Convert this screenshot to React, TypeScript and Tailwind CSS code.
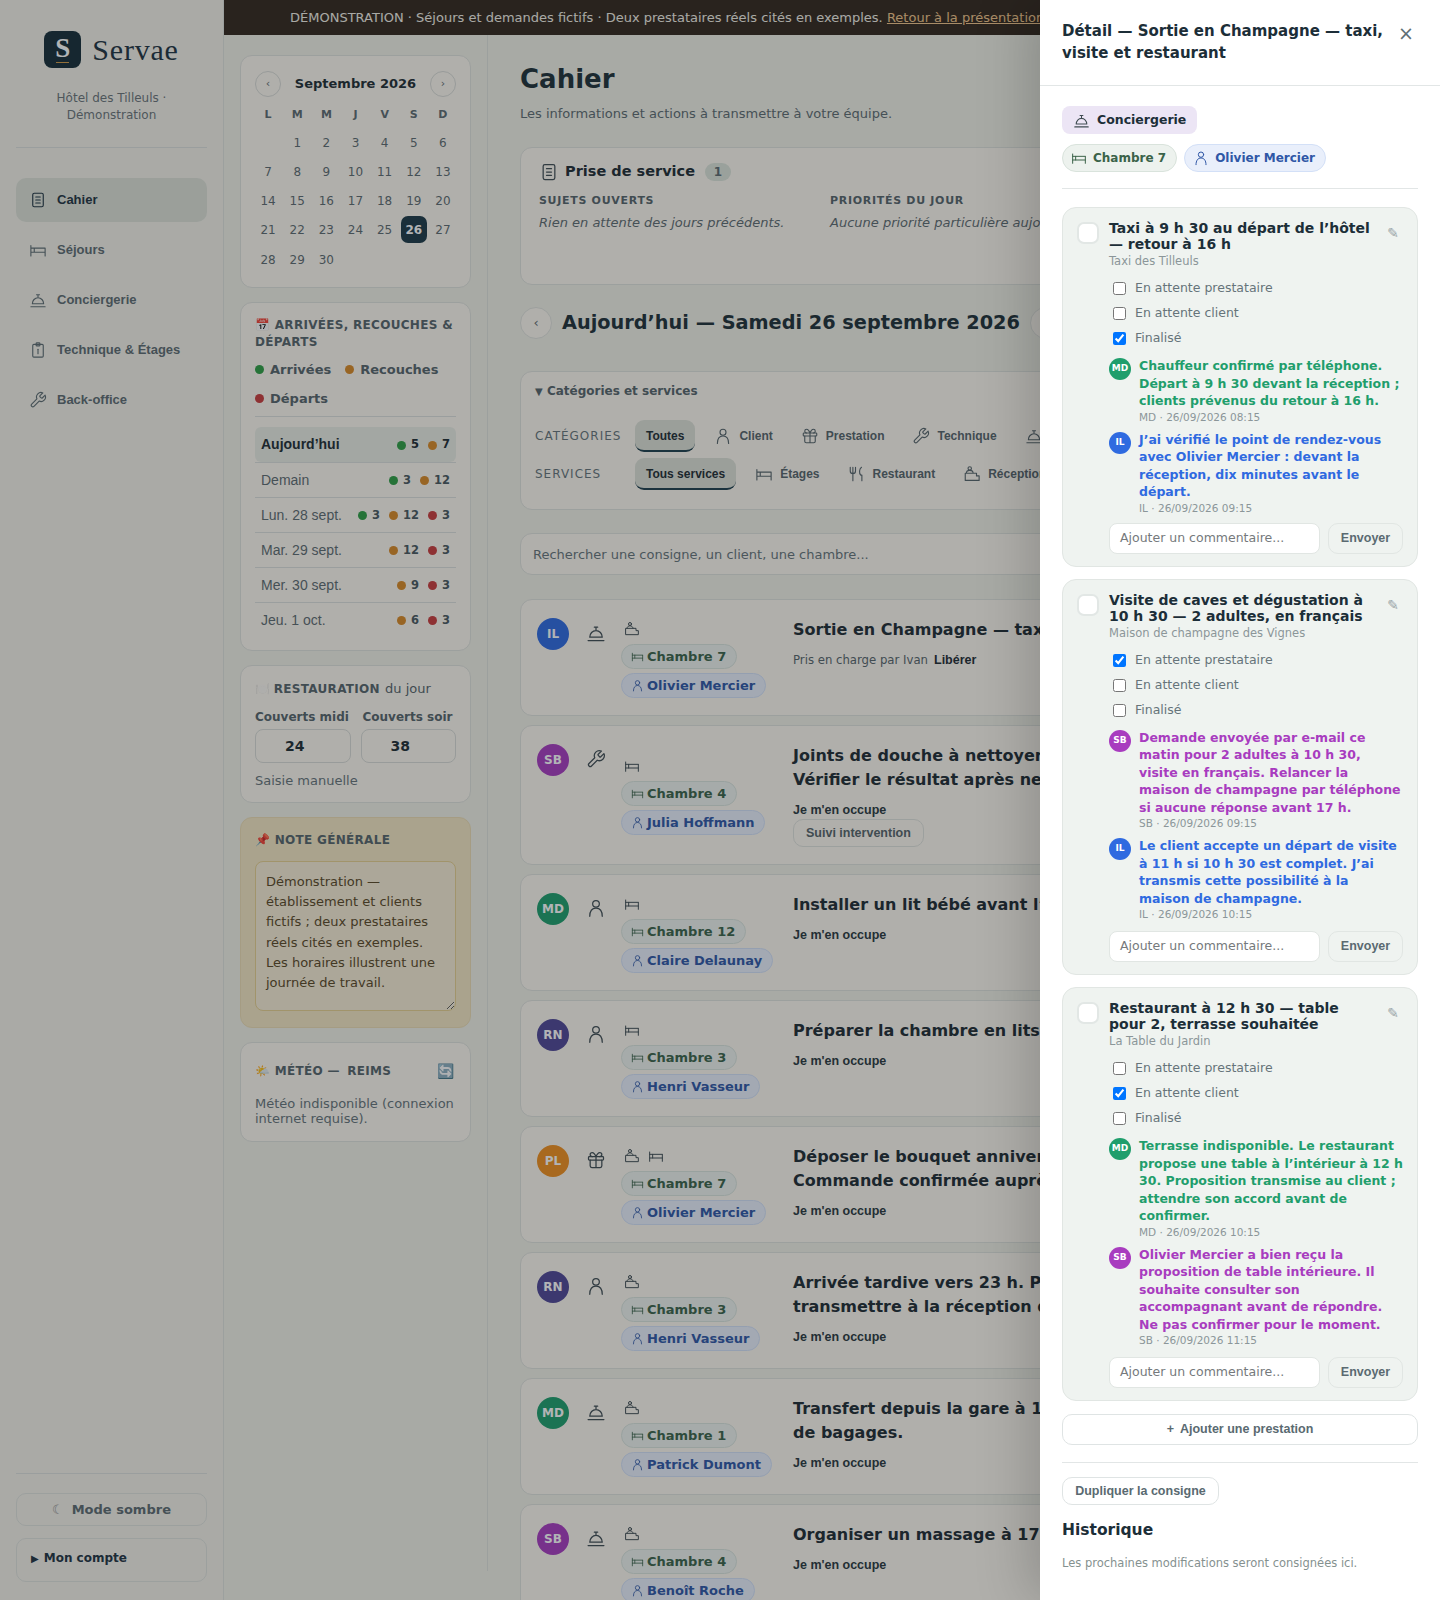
import React from "react";

type IP = { className?: string };
const S = ({ className, children }: IP & { children: React.ReactNode }) => (
  <svg viewBox="0 0 24 24" fill="none" stroke="currentColor" strokeWidth={1.5} strokeLinecap="round" strokeLinejoin="round" className={className}>
    {children}
  </svg>
);
const Doc = (p: IP) => <S {...p}><rect x="5" y="3" width="14" height="18" rx="2" /><path d="M9 8h6M9 12h6M9 16h6" /></S>;
const Bed = (p: IP) => <S {...p}><path d="M2.500 6v14M21.500 10v10M2.500 9.500h19M2.500 15h19M7 9.500v5.500" /></S>;
const Bell = (p: IP) => <S {...p}><path d="M10 5h4M12 5v3M4.500 17a7.500 8 0 0 1 15 0zM2.500 21h19" /></S>;
const Clip = (p: IP) => <S {...p}><rect x="5" y="4.500" width="14" height="17" rx="1.500" /><rect x="9.500" y="2.500" width="5" height="4" rx="1" /><path d="M12 11v6" /></S>;
const Wrench = (p: IP) => <S {...p}><path d="M14.700 6.300a1 1 0 0 0 0 1.400l1.600 1.600a1 1 0 0 0 1.400 0l3.770-3.770a6 6 0 0 1-7.940 7.940l-6.910 6.910a2.120 2.120 0 0 1-3-3l6.910-6.910a6 6 0 0 1 7.940-7.940l-3.760 3.760z" /></S>;
const Person = (p: IP) => <S {...p}><circle cx="12" cy="7" r="4" /><path d="M4.500 22c0-6.500 3-10 7.500-10s7.500 3.500 7.500 10" /></S>;
const Gift = (p: IP) => <S {...p}><rect x="3" y="8" width="18" height="4" rx="1" /><path d="M12 8v13M19 12v7a2 2 0 0 1-2 2H7a2 2 0 0 1-2-2v-7M7.500 8a2.500 2.500 0 0 1 0-5C10 3 12 8 12 8s2-5 4.500-5a2.500 2.500 0 0 1 0 5" /></S>;
const Fork = (p: IP) => <S {...p}><path d="M3 3v5a3.500 3.500 0 0 0 7 0V3M6.500 3v18M18 3c-3 2-3.500 8-1 10.500h1.500V21" /></S>;
const Desk = (p: IP) => <S {...p}><circle cx="9" cy="4.500" r="2.250" /><path d="M4.500 11c0-2.200 2-3.800 4.500-3.800s4.500 1.600 4.500 3.800M3 11h15v3.500h3.500v6H3z" /></S>;

const LIB = "font-['Liberation_Sans',Arial,sans-serif]";
const CARD = "rounded-[12px] border border-[#dfe1db] bg-[#fdf8ef]";
const SIDE = "rounded-[12px] border border-[#dfe1db] bg-[#fdf8ef] px-[14px]";

const week = ["L", "M", "M", "J", "V", "S", "D"];
const days: (number | null)[] = [null, ...Array.from({ length: 30 }, (_, i) => i + 1)];

const rows = [
  { d: "Aujourd’hui", a: 5, r: 7, x: 0, on: true },
  { d: "Demain", a: 3, r: 12, x: 0 },
  { d: "Lun. 28 sept.", a: 3, r: 12, x: 3 },
  { d: "Mar. 29 sept.", a: 0, r: 12, x: 3 },
  { d: "Mer. 30 sept.", a: 0, r: 9, x: 3 },
  { d: "Jeu. 1 oct.", a: 0, r: 6, x: 3 },
];

const Count = ({ c, n, dark }: { c: string; n: number; dark?: boolean }) => (
  <span className={`flex items-center gap-[5px] text-[11.5px] font-bold ${dark ? "text-[#1f2d33]" : "text-[#4a585e]"}`}>
    <span className={`h-[9px] w-[9px] rounded-full ${c}`} />
    {n}
  </span>
);

const cats = [
  { t: "Client", I: Person },
  { t: "Prestation", I: Gift },
  { t: "Technique", I: Wrench },
  { t: "Conciergerie", I: Bell },
];
const servs = [
  { t: "Étages", I: Bed },
  { t: "Restaurant", I: Fork },
  { t: "Réception", I: Desk },
];

const AV: Record<string, string> = {
  IL: "bg-[#2f6ae0]",
  SB: "bg-[#a83cbf]",
  MD: "bg-[#1f9e6c]",
  RN: "bg-[#4f4795]",
  PL: "bg-[#f08f1e]",
};

const tasks = [
  { a: "IL", c: Bell, s: [Desk], room: "Chambre 7", who: "Olivier Mercier", t: ["Sortie en Champagne — taxi, visite et restaurant"], own: true },
  { a: "SB", c: Wrench, s: [Bed], room: "Chambre 4", who: "Julia Hoffmann", t: ["Joints de douche à nettoyer et silicone à refaire.", "Vérifier le résultat après nettoyage."], follow: true, low: true },
  { a: "MD", c: Person, s: [Bed], room: "Chambre 12", who: "Claire Delaunay", t: ["Installer un lit bébé avant l’arrivée de la famille"] },
  { a: "RN", c: Person, s: [Bed], room: "Chambre 3", who: "Henri Vasseur", t: ["Préparer la chambre en lits séparés avant midi"] },
  { a: "PL", c: Gift, s: [Desk, Bed], room: "Chambre 7", who: "Olivier Mercier", t: ["Déposer le bouquet anniversaire en chambre avant 15 h.", "Commande confirmée auprès du fleuriste ce matin."] },
  { a: "RN", c: Person, s: [Desk], room: "Chambre 3", who: "Henri Vasseur", t: ["Arrivée tardive vers 23 h. Prévenir le veilleur et", "transmettre à la réception de nuit le code d’accès."] },
  { a: "MD", c: Bell, s: [Desk], room: "Chambre 1", who: "Patrick Dumont", t: ["Transfert depuis la gare à 14 h avec deux valises et sac", "de bagages."] },
  { a: "SB", c: Bell, s: [Desk], room: "Chambre 4", who: "Benoît Roche", t: ["Organiser un massage à 17 h au spa de l’hôtel"] },
];

const Chip = ({ I, t, blue, big }: { I: React.FC<IP>; t: string; blue?: boolean; big?: boolean }) => (
  <span
    className={`flex w-fit items-center rounded-full border font-bold whitespace-nowrap ${big ? "h-[28px] gap-[6px] pl-[8px] pr-[10px] text-[12px]" : "h-[25px] gap-[3px] pl-[9px] pr-[10px] text-[13px]"} ${
      blue ? "border-[#d3e0f7] bg-[#e9effb] text-[#2f57a6]" : "border-[#d9e3dc] bg-[#edf2ee] text-[#3b6349]"
    }`}
  >
    <I className={big ? "h-[16px] w-[16px]" : "h-[13px] w-[13px]"} />
    {t}
  </span>
);

const TaskCard = ({ task }: { task: (typeof tasks)[number] }) => (
  <div className={`${CARD} flex shrink-0 pb-[17px] pl-[16px] pr-[16px] pt-[18px]`}>
    <span className={`mr-[17px] flex h-[32px] w-[32px] shrink-0 items-center justify-center rounded-full text-[12px] font-bold text-white ${AV[task.a]}`}>{task.a}</span>
    <task.c className="mr-[15px] mt-[5px] h-[20px] w-[20px] shrink-0 text-[#3f4c52]" />
    <div className={`flex w-[172px] shrink-0 flex-col gap-[4px] ${task.low ? "mt-[11px]" : ""}`}>
      <div className="flex h-[22px] items-center gap-[8px] pl-[3px] text-[#3f4c52]">
        {task.s.map((I, i) => (
          <I key={i} className="h-[16px] w-[16px]" />
        ))}
      </div>
      <Chip I={Bed} t={task.room} />
      <Chip I={Person} t={task.who} blue />
    </div>
    <div className="min-w-0 flex-1">
      <div className="text-[16px] leading-[24px] font-bold whitespace-nowrap text-[#1e2c33]">
        {task.t.map((l, i) => (
          <div key={i}>{l}</div>
        ))}
      </div>
      <div className="mt-[10px] flex flex-col items-start">
        {task.own ? (
          <div className="flex items-center gap-[6px] text-[12.5px] leading-[16px]">
            <span className="font-['DejaVu_Sans_Condensed','DejaVu_Sans',sans-serif] text-[13px] text-[#56646a]">Pris en charge par Ivan</span>
            <span className={`${LIB} font-bold text-[#1e2c33]`}>Libérer</span>
          </div>
        ) : (
          <span className={`${LIB} text-[12.5px] leading-[16px] font-bold text-[#2a383e]`}>Je m'en occupe</span>
        )}
        {task.follow && (
          <span className={`${LIB} mt-[1px] flex h-[28px] items-center rounded-[10px] border border-[#dfe1db] px-[12px] text-[12.5px] font-bold text-[#566469]`}>Suivi intervention</span>
        )}
      </div>
    </div>
  </div>
);

const COLOR: Record<string, string> = {
  MD: "text-[#1f9e6c]",
  IL: "text-[#2f6ae0]",
  SB: "text-[#a83cbf]",
};

const items = [
  {
    t: "Taxi à 9 h 30 au départ de l’hôtel — retour à 16 h",
    sub: "Taxi des Tilleuls",
    st: [false, false, true],
    inp: "mt-[7px]",
    cm: [
      { a: "MD", t: "Chauffeur confirmé par téléphone. Départ à 9 h 30 devant la réception ; clients prévenus du retour à 16 h.", m: "MD · 26/09/2026 08:15" },
      { a: "IL", t: "J’ai vérifié le point de rendez-vous avec Olivier Mercier : devant la réception, dix minutes avant le départ.", m: "IL · 26/09/2026 09:15" },
    ],
  },
  {
    t: "Visite de caves et dégustation à 10 h 30 — 2 adultes, en français",
    sub: "Maison de champagne des Vignes",
    st: [true, false, false],
    inp: "mt-[9px]",
    cm: [
      { a: "SB", t: "Demande envoyée par e-mail ce matin pour 2 adultes à 10 h 30, visite en français. Relancer la maison de champagne par téléphone si aucune réponse avant 17 h.", m: "SB · 26/09/2026 09:15" },
      { a: "IL", t: "Le client accepte un départ de visite à 11 h si 10 h 30 est complet. J’ai transmis cette possibilité à la maison de champagne.", m: "IL · 26/09/2026 10:15" },
    ],
  },
  {
    t: "Restaurant à 12 h 30 — table pour 2, terrasse souhaitée",
    sub: "La Table du Jardin",
    st: [false, true, false],
    inp: "mt-[9px]",
    cm: [
      { a: "MD", t: "Terrasse indisponible. Le restaurant propose une table à l’intérieur à 12 h 30. Proposition transmise au client ; attendre son accord avant de confirmer.", m: "MD · 26/09/2026 10:15" },
      { a: "SB", t: "Olivier Mercier a bien reçu la proposition de table intérieure. Il souhaite consulter son accompagnant avant de répondre. Ne pas confirmer pour le moment.", m: "SB · 26/09/2026 11:15" },
    ],
  },
];
const labels = ["En attente prestataire", "En attente client", "Finalisé"];

const Item = ({ it }: { it: (typeof items)[number] }) => (
  <div className="rounded-[14px] border border-[#e1e6e3] bg-[#eff3f0] pb-[12px] pl-[14px] pr-[14px] pt-[12px]">
    <div className="flex">
      <span className="mt-[2px] mr-[10px] h-[22px] w-[22px] shrink-0 rounded-[7px] border-2 border-[#e2e7e5] bg-white" />
      <div className="min-w-0 flex-1">
        <div className="flex justify-between">
          <div className="w-[266px] text-[14px] leading-[16px] font-bold text-[#1c2e38]">{it.t}</div>
          <span className="mr-[4px] mt-[5px] text-[14px] leading-[16px] text-[#9aa5a8]">✎</span>
        </div>
        <div className="mt-[1px] text-[11.5px] leading-[17px] text-[#8b9699]">{it.sub}</div>
      </div>
    </div>
    <div className="ml-[36px] mt-[6px]">
      {it.st.map((c, i) => (
        <label key={i} className="flex h-[25px] items-center gap-[9px] text-[12.5px] text-[#66747a]">
          <input type="checkbox" checked={c} readOnly className="m-0 h-[13px] w-[13px]" />
          {labels[i]}
        </label>
      ))}
    </div>
    <div className="ml-[32px] mt-[6px] flex flex-col gap-[6px]">
      {it.cm.map((c, i) => (
        <div key={i} className="flex gap-[8px]">
          <span className={`mt-[1px] flex h-[22px] w-[22px] shrink-0 items-center justify-center rounded-full text-[9px] font-bold text-white ${AV[c.a]}`}>{c.a}</span>
          <div className="w-[266px]">
            <div className={`text-[12.5px] leading-[17.5px] font-bold ${COLOR[c.a]}`}>{c.t}</div>
            <div className="text-[10.5px] leading-[15px] text-[#8b9699]">{c.m}</div>
          </div>
        </div>
      ))}
    </div>
    <div className={`ml-[32px] flex gap-[8px] ${it.inp}`}>
      <div className="flex h-[31px] w-[211px] items-center rounded-[8px] border border-[#e1e6e3] bg-white pl-[10px] text-[12.5px] text-[#75797c]">Ajouter un commentaire...</div>
      <span className={`${LIB} flex h-[31px] w-[75px] items-center justify-center rounded-[10px] border border-[#e1e6e3] text-[12.5px] font-bold text-[#5a6a71]`}>Envoyer</span>
    </div>
  </div>
);

export default function App() {
  return (
    <div className="relative flex h-[1600px] w-[1440px] overflow-hidden bg-[#f0f0e6] font-['DejaVu_Sans',sans-serif]">
      {/* Sidebar */}
      <aside className="flex h-full w-[224px] shrink-0 flex-col border-r border-[#dfe1db] bg-[#f3f1e8] px-[16px]">
        <div className="flex h-[148px] flex-col items-center border-b border-[#dcdedb] pt-[31px]">
          <div className="flex items-center gap-[11px]">
            <span className="relative flex h-[37px] w-[37px] items-center justify-center rounded-[8px] bg-[#172e38] pb-[3px] font-['Liberation_Serif',serif] text-[27px] leading-[27px] font-bold text-white">
              S<span className="absolute bottom-[5px] left-[12px] h-[1px] w-[13px] bg-[#d19a47]" />
            </span>
            <span className="font-['Liberation_Serif',serif] text-[30px] leading-[37px] tracking-[0.8px] text-[#1f3340]">Servae</span>
          </div>
          <div className="mt-[22px] w-[150px] text-center text-[12px] leading-[17px] text-[#6b7478]">Hôtel des Tilleuls · Démonstration</div>
        </div>
        <nav className={`${LIB} mt-[30px] flex flex-col gap-[6px] text-[13px] font-bold text-[#5d6b70]`}>
          {[
            { t: "Cahier", I: Doc, on: true },
            { t: "Séjours", I: Bed },
            { t: "Conciergerie", I: Bell },
            { t: "Technique & Étages", I: Clip },
            { t: "Back-office", I: Wrench },
          ].map((n) => (
            <div key={n.t} className={`flex h-[44px] items-center gap-[10px] rounded-[10px] pl-[13px] ${n.on ? "bg-[#dde0d6] text-[#1f3340]" : ""}`}>
              <n.I className="h-[18px] w-[18px]" />
              {n.t}
            </div>
          ))}
        </nav>
        <div className="mt-auto flex flex-col border-t border-[#dcdedb] pt-[19px] pb-[18px]">
          <div className="flex h-[33px] items-center justify-center gap-[8px] rounded-[10px] border border-[#dfe1db] text-[13px] font-bold text-[#5d6b70]">
            <span className="text-[#8b8b8b]">☾</span> Mode sombre
          </div>
          <div className="mt-[12px] flex h-[44px] items-start gap-[5px] rounded-[10px] border border-[#dfe1db] pl-[14px] pt-[11px] text-[12px] leading-[17px] font-bold text-[#1f3340]">
            <span className="text-[10px]">▶</span> Mon compte
          </div>
        </div>
      </aside>

      <div className="flex min-w-0 flex-1 flex-col">
        <div className="h-[35px] shrink-0 overflow-hidden bg-[#33281d] pl-[66px] text-[13px] leading-[35px] whitespace-nowrap text-[#f2efe6]">
          DÉMONSTRATION · Séjours et demandes fictifs · Deux prestataires réels cités en exemples.{" "}
          <span className="text-[#f0c48a] underline">Retour à la présentation</span>
        </div>
        <div className="flex min-h-0 flex-1">
          {/* Colonne gauche */}
          <aside className="flex h-[1536px] w-[264px] shrink-0 flex-col gap-[14px] border-r border-[#dfe1db] px-[16px] pt-[20px]">
            <section className={`${SIDE} pt-[15px] pb-[14px]`}>
              <div className="flex items-center justify-between">
                <span className="flex h-[26px] w-[26px] items-center justify-center rounded-full border border-[#d8dad5] text-[11px] text-[#5d6b70]">‹</span>
                <span className="text-[13px] font-bold text-[#1f2d33]">Septembre 2026</span>
                <span className="flex h-[26px] w-[26px] items-center justify-center rounded-full border border-[#d8dad5] text-[11px] text-[#5d6b70]">›</span>
              </div>
              <div className="mx-[-1.5px] mt-[9px] grid grid-cols-7 text-center text-[11px] leading-[17px] font-bold text-[#5d6b70]">
                {week.map((d, i) => (
                  <span key={i}>{d}</span>
                ))}
              </div>
              <div className="mx-[-1.5px] mt-[5px] grid grid-cols-7 text-center text-[12px] text-[#5d6b70]">
                {days.map((d, i) => (
                  <span key={i} className={`flex h-[29px] items-center justify-center ${d !== null && d >= 28 ? "pt-[2px]" : ""}`}>
                    {d === 26 ? <span className="flex h-[27px] w-[26px] items-center justify-center rounded-[7px] bg-[#1d3946] font-bold text-white">26</span> : d}
                  </span>
                ))}
              </div>
            </section>

            <section className={`${SIDE} pt-[14px] pb-[13px]`}>
              <div className="text-[12px] leading-[17px] font-bold tracking-[0.3px] text-[#56646a]">📅 ARRIVÉES, RECOUCHES & DÉPARTS</div>
              <div className="mt-[4px] flex flex-wrap gap-x-[14px] border-b border-[#dcdedb] pb-[3px] text-[13px] leading-[29px] font-bold text-[#56646a]">
                <span className="flex items-center gap-[6px]"><span className="h-[9px] w-[9px] rounded-full bg-[#2f9e44]" />Arrivées</span>
                <span className="flex items-center gap-[6px]"><span className="h-[9px] w-[9px] rounded-full bg-[#d98a26]" />Recouches</span>
                <span className="flex items-center gap-[6px]"><span className="h-[9px] w-[9px] rounded-full bg-[#c93c3c]" />Départs</span>
              </div>
              <div className="mt-[10px]">
                {rows.map((r) => (
                  <div key={r.d} className={`flex h-[35px] items-center justify-between px-[6px] ${r.on ? "rounded-[6px] bg-[#e9ece3]" : "border-t border-[#dcdedb] first:border-t-0"}`}>
                    <span className={`${LIB} text-[14px] ${r.on ? "font-bold text-[#1f2d33]" : "text-[#5d6b70]"}`}>{r.d}</span>
                    <span className="flex gap-[9px] pt-[1px]">
                      {r.a > 0 && <Count c="bg-[#2f9e44]" n={r.a} dark={r.on} />}
                      {r.r > 0 && <Count c="bg-[#d98a26]" n={r.r} dark={r.on} />}
                      {r.x > 0 && <Count c="bg-[#c93c3c]" n={r.x} />}
                    </span>
                  </div>
                ))}
              </div>
            </section>

            <section className={`${SIDE} pt-[14px] pb-[13px]`}>
              <div className="text-[12px] leading-[17px] text-[#56646a]">
                <span className="opacity-30">🍽️</span> <span className="font-bold tracking-[0.3px]">RESTAURATION</span>
                <span className="ml-[1px] text-[13px]"> du jour</span>
              </div>
              <div className="mt-[11px] flex gap-[10px]">
                {[
                  { l: "Couverts midi", v: "24", c: "" },
                  { l: "Couverts soir", v: "38", c: "ml-[2px]" },
                ].map((x) => (
                  <div key={x.v} className="min-w-0 flex-1">
                    <div className={`text-[12px] leading-[16px] font-bold whitespace-nowrap text-[#56646a] ${x.c}`}>{x.l}</div>
                    <div className="mt-[4px] flex h-[34px] items-center justify-center rounded-[8px] border border-[#d8dad5] pr-[16px] text-[14px] font-bold text-[#1f2d33]">{x.v}</div>
                  </div>
                ))}
              </div>
              <div className="mt-[10px] text-[13px] leading-[16px] text-[#66747a]">Saisie manuelle</div>
            </section>

            <section className="rounded-[12px] border border-[#ecdcb4] bg-[#f3e6c2] px-[14px] pt-[14px] pb-[16px]">
              <div className="text-[12px] leading-[17px] font-bold tracking-[0.3px] text-[#56646a]">📌 NOTE GÉNÉRALE</div>
              <textarea
                readOnly
                value="Démonstration — établissement et clients fictifs ; deux prestataires réels cités en exemples. Les horaires illustrent une journée de travail."
                className="mt-[12px] block h-[150px] w-full rounded-[8px] border border-[#e6cf8f] bg-[#f6ecd4] px-[10px] pb-[9px] pt-[10px] text-[13px] leading-[20.2px] text-[#5a4826] outline-none"
              />
            </section>

            <section className={`${SIDE} pt-[20px] pb-[15px]`}>
              <div className="flex items-center justify-between pr-[2px] text-[12px] leading-[17px] font-bold tracking-[0.3px] text-[#56646a]">
                <span>🌤️ MÉTÉO — <span className="ml-[3px]">REIMS</span></span>
                <span className="text-[14px]">🔄</span>
              </div>
              <div className="mt-[16px] text-[13px] leading-[15px] text-[#66747a]">Météo indisponible (connexion internet requise).</div>
            </section>
          </aside>

          {/* Principal */}
          <main className="flex min-w-0 flex-1 flex-col overflow-hidden px-[32px]">
            <h1 className="mt-[28px] text-[26px] leading-[33px] font-bold text-[#1e3038]">Cahier</h1>
            <p className="mt-[9px] text-[13px] leading-[18px] text-[#5d6b70]">Les informations et actions à transmettre à votre équipe.</p>

            <section className={`${CARD} mt-[24px] h-[138px] shrink-0 pl-[18px] pr-[18px] pt-[13px]`}>
              <div className="flex items-center gap-[6px]">
                <Doc className="h-[20px] w-[20px] text-[#3f4c52]" />
                <span className="text-[14.5px] font-bold text-[#1e2c33]">Prise de service</span>
                <span className="ml-[4px] flex h-[18px] w-[26px] items-center justify-center rounded-full bg-[#dbe3d8] text-[12px] font-bold text-[#5d6b70]">1</span>
              </div>
              <div className="mt-[10px] grid grid-cols-[291px_291px_1fr]">
                <div>
                  <div className="text-[11px] leading-[16px] font-bold tracking-[0.7px] text-[#56646a]">SUJETS OUVERTS</div>
                  <div className="mt-[4px] text-[13px] italic text-[#5d6b70]">Rien en attente des jours précédents.</div>
                </div>
                <div>
                  <div className="text-[11px] leading-[16px] font-bold tracking-[0.7px] text-[#56646a]">PRIORITÉS DU JOUR</div>
                  <div className="mt-[4px] text-[13px] italic whitespace-nowrap text-[#5d6b70]">Aucune priorité particulière aujourd’hui.</div>
                </div>
              </div>
            </section>

            <div className="mt-[22px] flex h-[32px] shrink-0 items-center gap-[10px]">
              <span className="flex h-[32px] w-[32px] items-center justify-center rounded-full border border-[#dfe1db] bg-[#fdf8ef] text-[13px] text-[#5d6b70]">‹</span>
              <h2 className="pt-[1px] text-[19.3px] font-bold whitespace-nowrap text-[#1e3038]">Aujourd’hui — Samedi 26 septembre 2026</h2>
              <span className="flex h-[32px] w-[32px] items-center justify-center rounded-full border border-[#dfe1db] bg-[#fdf8ef] text-[13px] text-[#5d6b70]">›</span>
            </div>

            <section className={`${CARD} mt-[32px] h-[139px] shrink-0 px-[14px] pt-[10px]`}>
              <div className="text-[12px] leading-[18px] font-bold text-[#56646a]"><span className="text-[10px]">▼</span> Catégories et services</div>
              <div className="mt-[19px] flex items-center">
                <span className="w-[100px] shrink-0 text-[12px] tracking-[1px] text-[#66747a]">CATÉGORIES</span>
                <div className={`${LIB} flex gap-[10px] text-[12px] font-bold whitespace-nowrap text-[#56646a]`}>
                  <span className="flex h-[32px] items-center rounded-[9px] border-b-2 border-[#1f3f4c] bg-[#dde0d6] px-[11px] pt-[2px] text-[#1f2d33]">Toutes</span>
                  {cats.map((c) => (
                    <span key={c.t} className="flex h-[32px] items-center gap-[7px] px-[9px]"><c.I className="h-[18px] w-[18px]" />{c.t}</span>
                  ))}
                </div>
              </div>
              <div className="mt-[6px] flex items-center">
                <span className="w-[100px] shrink-0 text-[12px] tracking-[1px] text-[#66747a]">SERVICES</span>
                <div className={`${LIB} flex gap-[10px] text-[12px] font-bold whitespace-nowrap text-[#56646a]`}>
                  <span className="flex h-[32px] items-center rounded-[9px] border-b-2 border-[#1f3f4c] bg-[#dde0d6] px-[11px] pt-[2px] text-[#1f2d33]">Tous services</span>
                  {servs.map((c) => (
                    <span key={c.t} className="flex h-[32px] items-center gap-[7px] px-[9px]"><c.I className="h-[18px] w-[18px]" />{c.t}</span>
                  ))}
                </div>
              </div>
            </section>

            <div className={`${CARD} mt-[23px] flex h-[42px] shrink-0 items-center px-[12px] pt-[1px] text-[13px] text-[#66747a]`}>Rechercher une consigne, un client, une chambre...</div>

            <div className="mt-[24px] flex flex-col gap-[9px]">
              {tasks.map((t, i) => (
                <TaskCard key={i} task={t} />
              ))}
            </div>
          </main>
        </div>
      </div>

      {/* Voile */}
      <div className="absolute inset-0 bg-[rgba(20,28,32,0.33)]" />

      {/* Tiroir */}
      <div className="absolute top-0 right-0 flex h-full w-[400px] flex-col bg-white shadow-[-12px_0_50px_rgba(0,0,0,0.18)]">
        <div className="flex h-[86px] shrink-0 items-start justify-between border-b border-[#e2e6e6] pl-[22px] pr-[26px] pt-[20px]">
          <h3 className="w-[325px] text-[15px] leading-[22px] font-bold text-[#1c2e38]">Détail — Sortie en Champagne — taxi, visite et restaurant</h3>
          <span className="mt-[1px] text-[19px] leading-[24px] text-[#5f6f76]">×</span>
        </div>
        <div className="flex flex-col px-[22px] pt-[20px]">
          <span className="flex h-[28px] w-fit items-center gap-[7px] rounded-[8px] bg-[#ece5f5] pl-[11px] pr-[11px] text-[12.5px] font-bold text-[#1c2e38]">
            <Bell className="h-[17px] w-[17px] text-[#3f4c52]" /> Conciergerie
          </span>
          <div className="mt-[10px] flex gap-[7px] border-b border-[#e2e6e6] pb-[16px]">
            <Chip I={Bed} t="Chambre 7" big />
            <Chip I={Person} t="Olivier Mercier" blue big />
          </div>
          <div className="mt-[18px] flex flex-col gap-[12px]">
            {items.map((it, i) => (
              <Item key={i} it={it} />
            ))}
          </div>
          <div className={`${LIB} mt-[13px] flex h-[31px] items-center justify-center gap-[6px] rounded-[10px] border border-[#dfe4e4] text-[12.5px] font-bold text-[#5a6a71]`}>
            <span>+</span> Ajouter une prestation
          </div>
          <div className="mt-[17px] border-t border-[#e2e6e6] pt-[14px]">
            <span className={`${LIB} flex h-[28px] w-[157px] items-center justify-center rounded-[10px] border border-[#dfe4e4] text-[12.5px] font-bold text-[#5a6a71]`}>Dupliquer la consigne</span>
            <div className="mt-[14px] text-[15.5px] leading-[22px] font-bold text-[#1c2e38]">Historique</div>
            <div className="mt-[14px] text-[11.5px] leading-[17px] text-[#85918f]">Les prochaines modifications seront consignées ici.</div>
          </div>
        </div>
      </div>
    </div>
  );
}
